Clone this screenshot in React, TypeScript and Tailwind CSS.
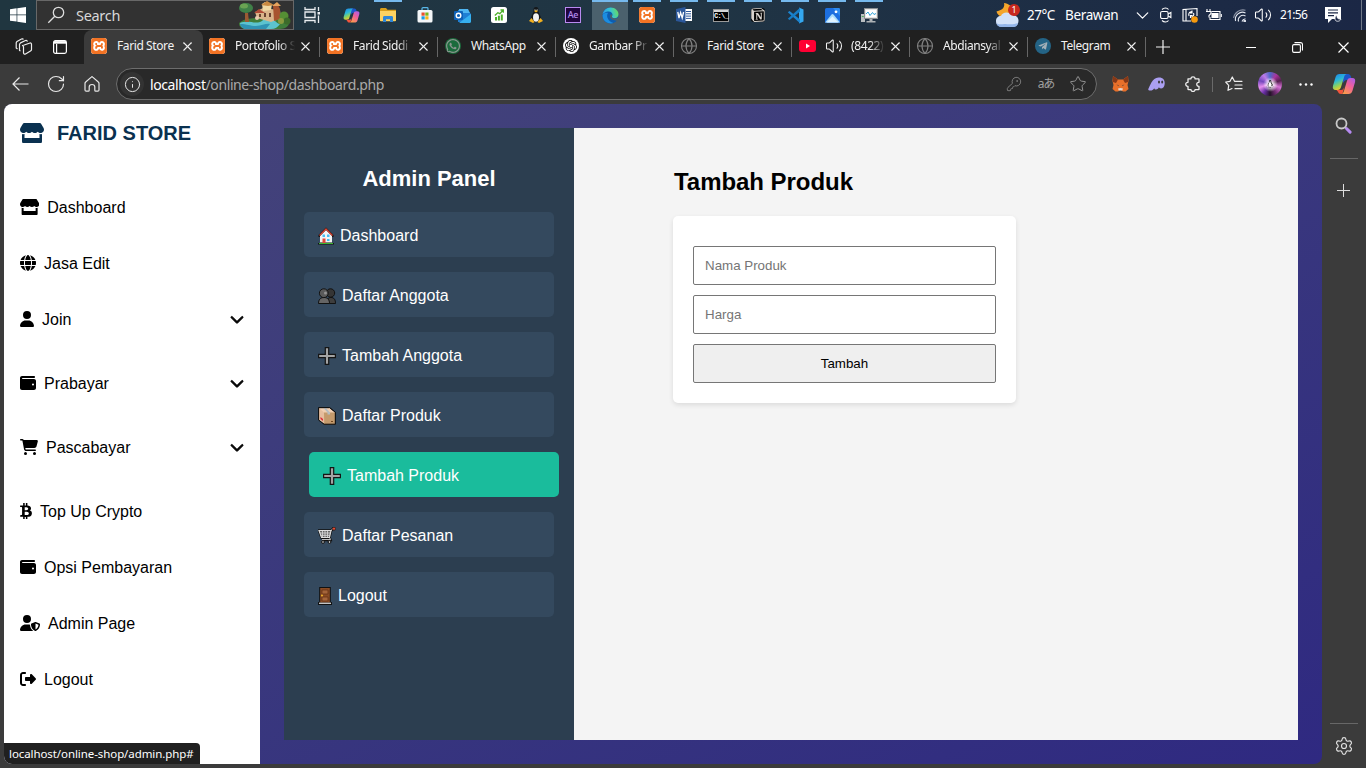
import React from "react";
import { FaStore, FaWhatsapp, FaTelegramPlane, FaLinux } from "react-icons/fa";
import { FaGlobe, FaUser, FaWallet, FaCartShopping, FaBtc, FaUserShield, FaRightFromBracket, FaChevronDown } from "react-icons/fa6";
import { SiXampp, SiOpenai, SiNotion } from "react-icons/si";
import { Search, Globe, X, Plus, RotateCw, Info, KeyRound, Star, Settings, Volume2, ChevronDown } from "lucide-react";

type Kids = { children?: React.ReactNode };

/* ---------- shared glyphs ---------- */

const Xampp = () => <SiXampp size={16} className="rounded-[3px] bg-white text-[#f27324]" />;

const Copilot = ({ size }: { size: number }) => (
  <svg width={size} height={size} viewBox="0 0 24 24">
    <defs>
      <linearGradient id="cpa" x1="0" y1="0" x2="0.4" y2="1">
        <stop offset="0" stopColor="#1c7fe8" />
        <stop offset="0.45" stopColor="#2bb8d8" />
        <stop offset="0.75" stopColor="#8fd25c" />
        <stop offset="1" stopColor="#f2c62f" />
      </linearGradient>
      <linearGradient id="cpb" x1="1" y1="0" x2="0.3" y2="1">
        <stop offset="0" stopColor="#a25bf0" />
        <stop offset="0.5" stopColor="#f0609a" />
        <stop offset="1" stopColor="#fb9a4b" />
      </linearGradient>
    </defs>
    <path fill="#1d55c9" d="M10 2h6c1.600 0 2.400 1 2.900 2.600L19.800 8H15c-2 0-3 1-3.600 3L10 6z" />
    <path fill="url(#cpa)" d="M7.500 2h7.200c-1.500.3-2.200 1.500-2.700 3.200l-2.800 9.300C8.500 17 7.500 18 5.500 18H3.700C1.300 18 .3 16.500 1 13.800L3.600 5C4.200 3 5.500 2 7.500 2z" />
    <path fill="url(#cpb)" d="M16.500 22H9.300c1.500-.3 2.200-1.500 2.700-3.200l2.800-9.300C15.500 7 16.500 6 18.500 6h1.800c2.400 0 3.400 1.500 2.700 4.200L20.400 19c-.6 2-1.900 3-3.900 3z" />
    <path fill="#f2553d" d="M4.500 18H9c1.500 0 2.400-.8 3-2.500l.6-1.800L11 20c-.4 1.400-1 2-2 2-1.600 0-2.500-.8-3-2.200z" />
  </svg>
);

/* ---------- taskbar ---------- */

const TaskIcon = ({ children, open, active }: Kids & { open?: boolean; active?: boolean }) => (
  <div className={`mr-px flex h-[30px] w-9 flex-col items-center ${active ? "bg-[#4b616d]" : ""}`}>
    <div className={`h-[2px] shrink-0 ${active ? "w-9" : "w-7"} ${open || active ? "bg-[#76b9ed]" : ""}`} />
    <div className="flex h-[26px] items-center justify-center">{children}</div>
  </div>
);

const SearchScene = () => (
  <svg width="54" height="28" viewBox="0 0 54 28" className="mr-[2px]">
    <path d="M2 22c6-5 10-4 16-5l16-5c8 0 17 4 18 10 0 3-4 6-9 6H10C5 28 2 26 2 22z" fill="#3f7d3a" />
    <path d="M3 22c8-3 14 1 20-1 5-2 3-5 8-5 4 0 9 7 12 7-2 3-5 5-9 5H10c-4 0-7-3-7-6z" fill="#5cc3cf" />
    <path d="M3 23c7 0 10 2 16 2s10-3 14-2l-4 5H10c-4 0-6-2-7-5z" fill="#2f93b4" />
    <path d="M8 12h3l1 9H8z" fill="#9b5a33" />
    <ellipse cx="9" cy="7" rx="7" ry="5" fill="#3f8048" />
    <ellipse cx="7" cy="5" rx="4" ry="2.500" fill="#6aa253" />
    <path d="M18 11l10-5 6 2 9 1 1 8-10 4-14-4z" fill="#d9b48a" />
    <path d="M17 12l5-4 6 4z" fill="#b04b37" />
    <path d="M25 3l3-2 7 2-1 6-8 1z" fill="#f0d9a4" />
    <path d="M24 4l6-4 7 4-6 1z" fill="#c98a42" />
    <path d="M36 4l4-2 3 6 0 10-6 2z" fill="#a8532f" />
    <path d="M35 5l5-4 4 4z" fill="#e4a35e" />
    <path d="M22 13h2v3h-2zM27 12h2v4h-2zM32 12h2v4h-2z" fill="#6a4130" />
    <circle cx="47" cy="15" r="4.500" fill="#558f34" />
    <circle cx="50" cy="20" r="3.500" fill="#3c6b2a" />
    <circle cx="44" cy="20" r="3" fill="#8a9a3f" />
    <circle cx="20" cy="17" r="2" fill="#e9cdb2" />
  </svg>
);

const Taskbar = () => (
  <div className="flex h-[30px] w-full shrink-0 bg-gradient-to-r from-[#203640] via-[#203544] to-[#1b2745]">
    <div className="flex w-9 items-center justify-center">
      <svg width="16" height="16" viewBox="0 0 16 16" fill="#fff">
        <path d="M0 2.200l6.600-.9v6.200H0zM7.300 1.200L16 0v7.500H7.300zM0 8.300h6.600v6.300L0 13.700zM7.300 8.300H16V16l-8.700-1.300z" />
      </svg>
    </div>
    <div className="flex h-[30px] w-[258px] items-center border border-[#686868] bg-[#323232] pl-[10px] text-[#d8d8d8]">
      <svg width="18" height="18" viewBox="0 0 18 18" fill="none" stroke="#ddd" strokeWidth="1.300">
        <circle cx="11.500" cy="6.500" r="5.200" /><path d="M7.800 10.200L1.300 16.700" />
      </svg>
      <span className="ml-[11px] flex-1 pt-px text-[14.5px] tracking-[-0.3px]">Search</span>
      <SearchScene />
    </div>
    <div className="flex pl-0">
      <TaskIcon>
        <svg width="17" height="16" viewBox="0 0 17 16" fill="none" stroke="#e9edf0" strokeWidth="1.300">
          <path d="M1 0v2.500h10V0M1 16v-2.500h10V16M1 5h10v5.500H1zM14.500 0v4M14.500 8.500V16" />
          <rect x="13.500" y="5" width="2.500" height="2.500" fill="#e9edf0" stroke="none" />
        </svg>
      </TaskIcon>
      <div className="w-[2px]" />
      <TaskIcon><Copilot size={17} /></TaskIcon>
      <TaskIcon open>
        <svg width="16" height="14" viewBox="0 0 16 14">
          <path d="M0 1.500C0 .7.600 0 1.500 0H6l1.500 1.800H16V13H0z" fill="#d99e1b" />
          <path d="M0 3h16v9c0 .8-.5 1.300-1.300 1.300H1.300C.5 13.300 0 12.800 0 12z" fill="#fdd261" />
          <path d="M3 14V9.500C3 8.700 3.500 8 4.500 8h7c1 0 1.500.7 1.500 1.500V14h-3v-2.800H6V14z" fill="#2f86d6" />
        </svg>
      </TaskIcon>
      <TaskIcon>
        <svg width="16" height="16" viewBox="0 0 16 16">
          <path d="M5 4V1.500C5 1 5.400.7 6 .7h4c.6 0 1 .3 1 .8V4" fill="none" stroke="#58b7e8" strokeWidth="1.200" />
          <rect x="0.500" y="3" width="15" height="12.500" rx="1.500" fill="#f3f6f8" />
          <path d="M4.500 5.500h3.200v3.200H4.500z" fill="#e8502f" /><path d="M8.300 5.500h3.200v3.200H8.300z" fill="#7bb51b" />
          <path d="M4.500 9.300h3.200v3.200H4.500z" fill="#1a9be6" /><path d="M8.300 9.300h3.200v3.200H8.300z" fill="#f7b61a" />
        </svg>
      </TaskIcon>
      <TaskIcon>
        <svg width="17" height="15" viewBox="0 0 17 15">
          <path d="M4 2l8-1 5 5v8H4z" fill="#1f7fd4" /><path d="M5 1h9l2 4H5z" fill="#4fb5f1" />
          <path d="M17 6v7.500c0 .8-.6 1.500-1.500 1.500H5z" fill="#36b0f0" />
          <rect x="0" y="3" width="9" height="9" rx="1" fill="#0f62b8" />
          <circle cx="4.500" cy="7.500" r="2.300" fill="none" stroke="#fff" strokeWidth="1.400" />
        </svg>
      </TaskIcon>
      <TaskIcon>
        <svg width="16" height="16" viewBox="0 0 16 16">
          <rect width="16" height="16" rx="2.500" fill="#fff" />
          <path d="M4 10h2v3.500H4zM6.900 8.700h2v4.800h-2zM9.800 7.500h2v6h-2z" fill="#4caf2a" />
          <path d="M3.800 8.500l3-2.800 2 1L12 3.300M9.500 3h2.800v2.800" fill="none" stroke="#4caf2a" strokeWidth="1.300" />
        </svg>
      </TaskIcon>
      <TaskIcon>
        <svg width="14" height="16" viewBox="0 0 14 16">
          <path d="M7 0C5 0 4.300 1.500 4.500 4 4.500 6 2.500 8 2 11c-.2 2 1 3.500 2 4h6c1-.5 2-2 2-4-.5-3-2.400-5-2.500-7C9.700 1.500 9 0 7 0z" fill="#15181a" />
          <ellipse cx="7" cy="10.500" rx="3" ry="4.200" fill="#f2f2f2" />
          <path d="M5 4l2-1 2 1-2 1.600z" fill="#f5b31b" /><path d="M5.500 2.500h.9v.9h-.9zM7.700 2.500h.9v.9h-.9z" fill="#fff" />
          <path d="M0 14l2.500-3 3 4-1.500 1zM14 14l-2.500-3-3 4 1.500 1z" fill="#f2b01e" />
        </svg>
      </TaskIcon>
      <TaskIcon>
        <span className="flex h-4 w-4 items-center justify-center border border-[#b98af0] bg-[#21053f] text-[9px] font-medium tracking-[-0.3px] text-[#b48cf0]">Ae</span>
      </TaskIcon>
      <TaskIcon active>
        <svg width="17" height="17" viewBox="0 0 17 17">
          <defs>
            <linearGradient id="eg" x1="0" y1="0.500" x2="1" y2="0.300"><stop offset="0" stopColor="#2b9be8" /><stop offset="0.500" stopColor="#35c3d4" /><stop offset="1" stopColor="#6bdc5a" /></linearGradient>
          </defs>
          <circle cx="8.500" cy="8.500" r="8" fill="#0d5db0" />
          <path d="M.5 8C1 3.500 4.500.5 8.700.5 13.500.5 16.500 4 16.500 7.200c0 2.500-1.800 4-4 4-1.700 0-2.700-.7-2.700-1.400 0-.5.7-.8.7-2C10.500 6 9 4.600 6.800 4.600 3.500 4.600.9 6.500.5 8z" fill="url(#eg)" />
          <path d="M.6 8C1.500 6 4 5.500 6.200 5.800 5 7 4.800 9 5.600 11c1 2.500 3.200 4.500 5.800 5C7 17.500.3 14.500.6 8z" fill="#1c8de0" />
          <path d="M10 9.800c0 1 1.300 1.700 3 1.700 1.200 0 2.300-.5 3.900-1l.1 2c-.5.600-1 1-1.400 1.300C11.500 13.500 8 12 8 9.500c0-1.500.8-2.200 2-2.300.4 1-.2 1.800 0 2.600z" fill="#4b616d" />
        </svg>
      </TaskIcon>
      <TaskIcon open><Xampp /></TaskIcon>
      <TaskIcon open>
        <svg width="16" height="16" viewBox="0 0 16 16">
          <rect x="8" y="2" width="8" height="12" fill="#fff" />
          <path d="M10 4.500h5M10 6.800h5M10 9.100h5M10 11.400h5" stroke="#2b579a" />
          <path d="M0 2l9.500-2v16L0 14z" fill="#2b579a" />
          <path d="M1.800 5l1.200 6 1.600-5.500L6.200 11l1.400-6" fill="none" stroke="#fff" strokeWidth="1.300" />
        </svg>
      </TaskIcon>
      <TaskIcon open>
        <div className="flex h-[13px] w-4 flex-col border border-[#9a9a9a] bg-black">
          <div className="h-[2px] bg-[#d6d6d6]" />
          <span className="font-['Liberation_Mono'] text-[7px] font-bold leading-[9px] tracking-[-0.7px] text-white">C:\_</span>
        </div>
      </TaskIcon>
      <TaskIcon open><SiNotion size={14} className="rounded-[3px] bg-black text-[#d8d4cf]" /></TaskIcon>
      <TaskIcon open>
        <svg width="17" height="17" viewBox="0 0 17 17">
          <path d="M12 .5l4.500 2v12l-4.500 2z" fill="#34a8f0" />
          <path d="M.8 5.300l1.800-1.200L13 12.500v3.800z" fill="#1b85d1" /><path d="M.8 11.700l1.800 1.200L13 4.500V.7z" fill="#167cc4" />
        </svg>
      </TaskIcon>
      <TaskIcon open>
        <svg width="15" height="15" viewBox="0 0 15 15">
          <rect width="15" height="15" rx="1.500" fill="#1c6fe0" /><path d="M8 0h5.500C14.300 0 15 .7 15 1.500V8z" fill="#2d8bf0" />
          <path d="M0 14.500L6.500 6.500c.6-.7 1.400-.7 2 0L15 14.500z" fill="#a9dcfb" /><path d="M1.500 14.500L7.500 8.500l6 6z" fill="#e0f3ff" />
          <circle cx="11" cy="3.800" r="1.400" fill="#fff" />
        </svg>
      </TaskIcon>
      <TaskIcon open>
        <svg width="17" height="15" viewBox="0 0 17 15">
          <path d="M0 6h4v8H0z" fill="#b9bdc0" /><path d="M.8 8h2v1h-2z" fill="#4fb35b" />
          <rect x="3.500" y=".5" width="13" height="10" fill="#e6e6e6" stroke="#8b8f92" />
          <path d="M5 2h10v7H5z" fill="#fff" /><path d="M5 6l2-2 2 3.500 2.500-3 1.500 2 2-1" fill="none" stroke="#2fa2d8" />
          <path d="M8.500 11h3v2h3v1.500h-9V13h3z" fill="#aeb2b5" />
        </svg>
      </TaskIcon>
    </div>
    <div className="ml-auto flex items-center text-white">
      <svg width="28" height="26" viewBox="0 0 28 26" className="mr-[5px]">
        <path d="M10 1c1 4-1 7-7.500 8.500C3 12 5 14 8 15l9-3V4C14 2 12 1 10 1z" fill="#f4a62c" />
        <path d="M7 14c1-4 8-5 10.500-1 4-.5 7 2 7 5.500 0 3.500-2 6-5 6H7c-3.500 0-5-2.500-5-5.500 0-3 2-5 5-5z" fill="#d3e2f9" />
        <path d="M2.500 21c2 2 5 1 8 1s9 1 13.500-1c-.5 2.500-2 4-4 4H7c-2 0-4-1.500-4.500-4z" fill="#94b6ea" />
        <circle cx="20" cy="8" r="6" fill="#c8281e" />
        <text x="20" y="11.300" fontSize="9" fill="#fff" textAnchor="middle">1</text>
      </svg>
      <span className="w-[38px] whitespace-nowrap text-[13.5px] tracking-[-0.5px]">27°C</span>
      <span className="w-[65px] text-[13.5px] tracking-[-0.35px]">Berawan</span>
      <span className="flex w-6 justify-center"><ChevronDown size={21} strokeWidth={1.400} /></span>
      <span className="flex w-6 justify-center">
        <svg width="12" height="16" viewBox="0 0 12 16" fill="none" stroke="#fff" strokeWidth="1.100">
          <path d="M2 2.500C4 .5 7 .5 8.500 2.500M2 13.500c2 2 5 2 6.500 0" /><rect x=".6" y="4.500" width="7.500" height="7" rx="1.500" /><path d="M8.100 7l2.800-1.500v5L8.100 9" />
        </svg>
      </span>
      <span className="flex w-6 justify-center">
        <svg width="16" height="16" viewBox="0 0 16 16" fill="none" stroke="#fff" strokeWidth="1.100">
          <path d="M9 14H1V2.500l14-1V9M4 2.500V14M7 9c-1-3 1-4.500 3-4M10 3.500V6H8M11.500 6c1 2-.5 4-2.500 4M8.500 11V8.500h2" /><circle cx="12.500" cy="12.500" r="3.300" fill="#f79a0c" stroke="none" />
        </svg>
      </span>
      <span className="flex w-6 justify-center">
        <svg width="16" height="12" viewBox="0 0 16 12" fill="none" stroke="#fff" strokeWidth="1.100">
          <path d="M5.500 2.500H14v8H4V8" /><path d="M6 4.500h6v4H6z" fill="#fff" /><path d="M15.300 5v3M1 0v2M4 0v2M0 2.500h5v2l-2 2v2" />
        </svg>
      </span>
      <span className="flex w-[26px] justify-center">
        <svg width="13" height="13" viewBox="0 0 13 13" fill="none" stroke="#e4e8f0" strokeWidth="1.100">
          <path d="M.6 9A9.500 9.500 0 0 1 12.500 1.200" opacity=".55" /><path d="M2.600 12A7 7 0 0 1 12.500 4M5.500 12.500A4.800 4.800 0 0 1 12.500 7M9 12.500c.5-1.500 1.500-2.500 3.500-2.800" /><circle cx="11.700" cy="12" r=".8" fill="#fff" />
        </svg>
      </span>
      <span className="flex w-[22px] justify-center"><Volume2 size={18} strokeWidth={1.400} /></span>
      <span className="ml-[6px] w-[43px] text-[12px] tracking-[-0.7px]">21:56</span>
      <svg width="17" height="17" viewBox="0 0 17 17" className="ml-[2px]">
        <path d="M0 0h16v12H7l-4 4v-4H0z" fill="#fff" /><path d="M3 3h10M3 5.800h10M3 8.600h6" stroke="#1b2745" strokeWidth="1.200" />
        <path d="M12 8c-.5 3 1 4.500 4 4-1 3-6 3-6 0 0-2 .7-3.400 2-4z" fill="#1b2745" stroke="#fff" strokeWidth=".8" />
      </svg>
      <span className="ml-[19px] mr-1 h-[30px] w-px bg-[#6f7887]" />
    </div>
  </div>
);

/* ---------- browser chrome ---------- */

const Tab = ({ icon, title, active, line, fade, pre }: { icon: React.ReactNode; title: string; active?: boolean; line?: boolean; fade?: boolean; pre?: React.ReactNode }) => (
  <div className={`flex h-[34px] items-center pb-[2px] pl-[7px] ${active ? "-mr-px w-[119px] rounded-t-lg bg-[#3b3b3b]" : "w-[118px]"}`}>
    <span className="flex w-4 shrink-0 justify-center">{icon}</span>
    <span className={`ml-[10px] flex w-[60px] shrink-0 items-center whitespace-nowrap text-[12px] tracking-[-0.4px] text-[#f2f2f2] ${fade ? "[mask-image:linear-gradient(to_right,black_74%,transparent_100%)]" : ""}`}>
      {pre}{title}
    </span>
    <span className="flex w-5 shrink-0 justify-center"><X size={15} strokeWidth={1.700} color="#f0f0f0" /></span>
    <span className={`ml-auto mt-[2px] h-5 w-px ${line ? "bg-[#666]" : ""}`} />
  </div>
);

const TabStrip = () => (
  <div className="flex h-[34px] shrink-0 items-center bg-[#202020] text-[#f0f0f0]">
    <div className="flex w-12 justify-center">
      <svg width="18" height="18" viewBox="0 0 18 18" fill="none" stroke="#eee" strokeWidth="1.200" strokeLinejoin="round">
        <path d="M8.500 7.300l6.500-2.300c.8-.2 1.500.3 1.500 1.200v5.300c0 .6-.4 1.200-1 1.500l-5 3c-1 .5-2 0-2-1.200V8.800c0-.7-.5-1.300-1.500-1.500M5.500 13l-1-.5V6.500c0-.7.400-1.200 1-1.600l5-2.400c.8-.3 1.700.2 2 1M2.500 11L1.200 10V5c0-.7.300-1.100.8-1.500L6.500 1c.7-.4 1.500-.2 1.900.5" />
      </svg>
    </div>
    <div className="flex w-9 justify-center pr-3">
      <svg width="14" height="14" viewBox="0 0 14 14" fill="none" stroke="#fff" strokeWidth="1.200">
        <rect x=".6" y=".6" width="12.800" height="12.800" rx="1.800" /><path d="M1 2.400h12" strokeWidth="2.600" /><path d="M3.600 4v9" />
      </svg>
    </div>
    <Tab icon={<Xampp />} title="Farid Store" active />
    <Tab icon={<Xampp />} title="Portofolio S" line fade />
    <Tab icon={<Xampp />} title="Farid Siddi" line fade />
    <Tab icon={<FaWhatsapp size={16} className="shrink-0 rounded-full bg-[#1b6b3c] text-[#8b958f]" />} title="WhatsApp" line />
    <Tab icon={<span className="flex h-4 w-4 items-center justify-center rounded-full bg-white text-black"><SiOpenai size={12} /></span>} title="Gambar Pr" line fade />
    <Tab icon={<Globe size={18} strokeWidth={1.500} color="#808080" className="shrink-0" />} title="Farid Store" line />
    <Tab
      icon={<svg width="17" height="12" viewBox="0 0 17 12" className="shrink-0"><rect width="17" height="12" rx="3" fill="#ff0033" /><path d="M7 3.500v5L11 6z" fill="#fff" /></svg>}
      pre={<Volume2 size={18} strokeWidth={1.400} className="mr-[8px] shrink-0" />}
      title="(8422)" line fade
    />
    <Tab icon={<Globe size={18} strokeWidth={1.500} color="#808080" className="shrink-0" />} title="Abdiansyal" line fade />
    <Tab icon={<span className="flex h-4 w-4 items-center justify-center rounded-full bg-[#246486] text-[#a3b0b8]"><FaTelegramPlane size={10} className="mr-px" /></span>} title="Telegram" line />
    <div className="flex w-[34px] justify-center">
      <svg width="14" height="14" viewBox="0 0 14 14" stroke="#f0f0f0"><path d="M7 0v14M0 7h14" strokeWidth="1.200" /></svg>
    </div>
    <div className="ml-auto flex">
      <div className="flex w-[46px] items-center justify-center"><span className="h-px w-[10px] bg-white" /></div>
      <div className="flex w-[46px] items-center justify-center">
        <svg width="11" height="11" viewBox="0 0 11 11" fill="none" stroke="#fff" strokeWidth="1.100"><rect x=".6" y="2.600" width="7.800" height="7.800" rx="1.300" /><path d="M2.500.6h6c1.200 0 2 .8 2 2v6" /></svg>
      </div>
      <div className="flex w-[46px] items-center justify-center">
        <svg width="11" height="11" viewBox="0 0 11 11" stroke="#fff" strokeWidth="1.200"><path d="M.5.5l10 10M10.500.5l-10 10" /></svg>
      </div>
    </div>
  </div>
);

const Tool = ({ children }: Kids) => <span className="flex h-9 w-9 shrink-0 items-center justify-center">{children}</span>;

const AddressRow = () => (
  <div className="flex h-10 shrink-0 items-center bg-[#3b3b3b] pl-[2px] text-[#e8e8e8]">
    <Tool>
      <svg width="17" height="14" viewBox="0 0 17 14" fill="none" stroke="#e8e8e8" strokeWidth="1.200"><path d="M7.500.5L1 7l6.500 6.500M1 7h15.500" /></svg>
    </Tool>
    <Tool><RotateCw size={20} strokeWidth={1.400} /></Tool>
    <Tool>
      <svg width="16" height="16" viewBox="0 0 16 16" fill="none" stroke="#e8e8e8" strokeWidth="1.200" strokeLinejoin="round">
        <path d="M7.300 1.100L1.700 6c-.5.4-.7.800-.7 1.400V14c0 .8.400 1.200 1.200 1.200h2.100c.5 0 .9-.4.900-.9v-3.500c0-1.300.9-2.300 2.800-2.300s2.800 1 2.800 2.300v3.500c0 .5.400.9.900.9h2.100c.8 0 1.200-.4 1.200-1.200V7.400c0-.6-.2-1-.7-1.400L8.700 1.100c-.4-.4-1-.4-1.400 0z" />
      </svg>
    </Tool>
    <div className="ml-[6px] flex h-8 w-[981px] items-center rounded-full border border-[#6d6d6d] bg-[#292929] pl-[3px]">
      <span className="flex h-6 w-6 items-center justify-center rounded-full bg-[#333]"><Info size={17} strokeWidth={1.400} /></span>
      <span className="ml-[6px] flex-1 text-[14px] tracking-[-0.4px] text-[#a9a9a9]"><span className="text-white">localhost</span>/online-shop/dashboard.php</span>
      <span className="flex w-8 justify-center text-[#868686]"><KeyRound size={16} strokeWidth={1.300} /></span>
      <span className="flex w-8 justify-center whitespace-nowrap text-[12px] tracking-[-1px] text-[#a0a0a0]">aあ</span>
      <span className="mr-[2px] flex w-8 justify-center text-[#969696]"><Star size={18} strokeWidth={1.300} /></span>
    </div>
    <div className="ml-[5px] flex items-center">
      <Tool>
        <svg width="17" height="16" viewBox="0 0 17 16">
          <path d="M1 0l5 3.500h5L16 0l.5 5-1 4 1 4-3 2.500H11L8.500 14 6 15.500H3.500L.5 13l1-4-1-4z" fill="#e8702a" />
          <path d="M1 0l5 3.500L4 7 .8 6zM16 0l-5 3.500L13 7l3.200-1z" fill="#863818" />
          <path d="M6 12.500L8.500 12l2.500.500-.7 2H6.700z" fill="#e6d5cc" /><path d="M4.500 8.500l2 .8.300 1zM12.500 8.500l-2 .8-.3 1z" fill="#26303a" />
        </svg>
      </Tool>
      <Tool>
        <svg width="17" height="14" viewBox="0 0 17 14">
          <path d="M.3 12C2 9 4 1 10.500.5 15 .3 17 3 16.700 7c-.3 3-2 4.500-3.700 4.500-1.300 0-2-1-2-1.500-.5 1.500-1.600 2.500-3 2.500-1 0-1.600-.5-1.700-1.300C5.300 12.700 4 13.500 2.500 13.500 1 13.500 0 13 .3 12z" fill="#ab9ff2" />
          <ellipse cx="11" cy="5" rx="1" ry="1.600" fill="#3b3b3b" /><ellipse cx="14.200" cy="5" rx="1" ry="1.600" fill="#3b3b3b" />
        </svg>
      </Tool>
      <Tool>
        <svg width="16" height="16" viewBox="0 0 16 16" fill="none" stroke="#eee" strokeWidth="1.300" strokeLinejoin="round" className="ml-[2px]">
          <path d="M3 2.800h3C5.700.2 10.300.2 10 2.800h3.500c.3 0 .5.200.5.500v3c-3-.3-3 4.300 0 4v2.900c0 .3-.2.500-.5.500H10c.3 2.200-4.300 2.200-4 0H3.500c-.3 0-.5-.2-.5-.5v-2.900c-3 .3-3-4.300 0-4z" />
        </svg>
      </Tool>
      <span className="ml-[2px] mr-[3px] h-[15px] w-px bg-[#6a6a6a]" />
      <Tool>
        <svg width="18" height="16" viewBox="0 0 18 16" fill="none" stroke="#eee" strokeWidth="1.200" strokeLinejoin="round" strokeLinecap="round">
          <path d="M9.500 5.300L7.300 1 5 5.300l-4.300.7 3 3.300-.7 5 4-1.800M9.500 5.300H17M10 9h7M10 12.700h7" />
        </svg>
      </Tool>
      <Tool>
        <span className="flex h-6 w-6 items-center justify-center rounded-full bg-[conic-gradient(#4e68c9,#a8349b,#55204f,#d873d7,#752f77,#221126,#6a30a6,#e58fee,#7447bd,#bd7be8,#4e68c9)]">
          <span className="flex h-[15px] w-[15px] items-center justify-center rounded-full bg-[radial-gradient(#fff_15%,#f0c9f700_70%)] text-[#222]"><FaLinux size={8} /></span>
        </span>
      </Tool>
      <Tool>
        <svg width="14" height="3" viewBox="0 0 14 3" fill="#fff"><circle cx="1.500" cy="1.500" r="1.200" /><circle cx="7" cy="1.500" r="1.200" /><circle cx="12.500" cy="1.500" r="1.200" /></svg>
      </Tool>
      <Tool><span className="ml-[4px]"><Copilot size={24} /></span></Tool>
    </div>
  </div>
);

const SideRail = () => (
  <div className="flex w-11 shrink-0 flex-col items-center text-[#e0e0e0]">
    <svg width="17" height="17" viewBox="0 0 17 17" fill="none" className="mr-[2px] mt-[13px]">
      <path d="M10 10l2 2" stroke="#888" strokeWidth="1.500" /><path d="M11.500 11.500l3.600 3.600" stroke="#b58af0" strokeWidth="3" strokeLinecap="round" />
      <circle cx="6.500" cy="6.500" r="5" stroke="#c9c9c9" strokeWidth="1.800" />
    </svg>
    <span className="mt-6 h-px w-7 bg-[#676767]" />
    <svg width="13" height="13" viewBox="0 0 13 13" stroke="#ddd" className="mr-px mt-[25px]"><path d="M6.500 0v13M0 6.500h13" /></svg>
    <span className="mt-auto h-px w-7 bg-[#676767]" />
    <Settings size={20} strokeWidth={1.400} className="mb-3 mt-3" />
  </div>
);

/* ---------- store navigation ---------- */

const NavItem = ({ icon, label, sub }: { icon: React.ReactNode; label: string; sub?: boolean }) => (
  <div className={`flex h-10 items-center text-[16px] text-black ${sub ? "mb-6" : "mb-4"}`}>
    {icon}
    <span className="ml-2 whitespace-nowrap pt-[2px]">{label}</span>
    {sub && <FaChevronDown className="ml-auto h-4 w-[14px] overflow-visible stroke-current stroke-[28px]" />}
  </div>
);

const StoreNav = () => (
  <nav className="flex w-64 shrink-0 flex-col bg-white px-4 font-['Liberation_Sans',Arial,sans-serif]">
    <div className="mb-[54px] mt-[14px] flex h-[30px] items-center text-[#0a3150]">
      <FaStore className="h-5 w-6" />
      <span className="ml-[13px] text-[20px] font-bold">FARID STORE</span>
    </div>
    <div className="-mt-[15px] flex flex-col">
      <NavItem icon={<FaStore className="h-4 w-[19.25px]" />} label="Dashboard" />
      <NavItem icon={<FaGlobe className="h-4 w-4" />} label="Jasa Edit" />
      <NavItem icon={<FaUser className="h-4 w-[14px]" />} label="Join" sub />
      <NavItem icon={<FaWallet className="h-4 w-4" />} label="Prabayar" sub />
      <NavItem icon={<FaCartShopping className="h-4 w-[18px]" />} label="Pascabayar" sub />
      <NavItem icon={<FaBtc className="h-4 w-3" />} label="Top Up Crypto" />
      <NavItem icon={<FaWallet className="h-4 w-4" />} label="Opsi Pembayaran" />
      <NavItem icon={<FaUserShield className="h-4 w-5" />} label="Admin Page" />
      <NavItem icon={<FaRightFromBracket className="h-4 w-4" />} label="Logout" />
    </div>
  </nav>
);

/* ---------- admin panel ---------- */

const HomeIcon = () => (
  <svg width="16" height="18" viewBox="0 0 16 18">
    <path d="M8 .5L15.500 8v2H14v6h2v1.500H0V16h2v-6H.5V8z" fill="#111" />
    <path d="M8 3l6 6v6.500H2V9z" fill="#f4f4f4" /><path d="M1.500 8.500L8 2l6.500 6.500" fill="none" stroke="#d9412f" strokeWidth="1.300" />
    <path d="M4.500 7.500h2.500v2.500H4.500zM9 7.500h2.500v2.500H9zM9 12h2.500v2H9z" fill="#45bdf2" /><path d="M4.500 11.500h3V16h-3z" fill="#e0483a" /><path d="M1 16h14v1H1z" fill="#3fb52f" />
  </svg>
);
const PeopleIcon = () => (
  <svg width="18" height="16" viewBox="0 0 18 16" stroke="#111">
    <path d="M9 15.500c0-4 1-6 4-6s4.500 2 4.500 6z" fill="#3e3e3e" /><circle cx="12.500" cy="5" r="4.200" fill="#353535" />
    <path d="M.5 15.500c0-4 2-6 5.500-6s5.500 2 5.500 6z" fill="#656565" /><circle cx="5.800" cy="5.200" r="4.400" fill="#5a5a5a" />
    <circle cx="7.500" cy="5" r="1.500" fill="#929292" stroke="none" />
  </svg>
);
const PlusIcon = () => (
  <svg width="18" height="18" viewBox="0 0 18 18"><path d="M7.300.6h3.400v6.700h6.700v3.400h-6.700v6.700H7.300v-6.700H.6V7.300h6.700z" fill="#a3a3a3" stroke="#151515" strokeWidth="1.200" /></svg>
);
const BoxIcon = () => (
  <svg width="18" height="18" viewBox="0 0 18 18" stroke="#111">
    <path d="M.6.6h11l5.700 4.600v12H6.200L.6 13z" fill="#f1cfb2" /><path d="M6 5.500h11v11.700H6.200z" fill="#c49a6c" stroke="none" /><path d="M1 1l5 4.500V17l-5-4z" fill="#e6bd9e" stroke="none" />
    <path d="M5.500 1h2.500l4 4.500v2H9.500v-2z" fill="#b6bcc0" stroke="none" /><path d="M2.500 10l2.500 2v2l-2.500-2z" fill="#df2c37" stroke="none" /><path d="M13 15l1-1 1 1" stroke="#70461f" fill="none" />
    <path d="M.6.6h11l5.700 4.600v12H6.200L.6 13z" fill="none" />
  </svg>
);
const TrolleyIcon = () => (
  <svg width="18" height="17" viewBox="0 0 18 17" fill="none">
    <path d="M1 3.500h12l-1.500 7H3.500zM13 4l2.500-3H17M11.500 10.500l1 2.500H4" stroke="#111" strokeWidth="2.600" />
    <path d="M1 3.500h12l-1.500 7H3.500z" fill="#666" stroke="#ddd" strokeWidth="1.200" />
    <path d="M2 6h10.500M2.700 8.300H12M4.500 4v6M7 4v6M9.500 4v6M13 4l2-3M11.500 10.500l1 2H4" stroke="#d4d4d4" strokeWidth=".9" />
    <circle cx="16" cy="1.700" r="1.600" fill="#e54b35" stroke="#111" strokeWidth=".6" /><circle cx="5" cy="15" r="1.400" fill="#ccc" stroke="#111" /><circle cx="11.500" cy="15" r="1.400" fill="#ccc" stroke="#111" />
  </svg>
);
const DoorIcon = () => (
  <svg width="14" height="18" viewBox="0 0 14 18">
    <path d="M1.200 0h11.600v15H14v3H0v-3h1.200z" fill="#111" /><path d="M2.200 1h9.600v14.500H2.200z" fill="#8a4b24" />
    <path d="M4 3h6v4H4zM4 10h6v4H4z" fill="#a5653a" stroke="#5e2f12" strokeWidth=".7" /><circle cx="4" cy="8.500" r="1" fill="#f0b429" /><path d="M1 15.600h12V17H1z" fill="#c4c4c4" />
  </svg>
);

const PanelLink = ({ icon, label, active }: { icon: React.ReactNode; label: string; active?: boolean }) => (
  <a className={`flex h-[45px] items-center rounded-[5px] pl-[14px] pt-[2px] text-[16px] text-white ${active ? "translate-x-[5px] bg-[#1abc9c]" : "bg-[#34495e]"}`}>
    {icon}
    <span className="ml-[6px]">{label}</span>
  </a>
);

const AdminPanel = () => (
  <div className="flex flex-1 font-['Liberation_Sans',Arial,sans-serif]">
    <aside className="flex w-[290px] shrink-0 flex-col gap-[15px] bg-[#2c3e50] px-5">
      <h2 className="mb-1 mt-[37px] text-center text-[22px] font-bold leading-7 text-white">Admin Panel</h2>
      <PanelLink icon={<HomeIcon />} label="Dashboard" />
      <PanelLink icon={<PeopleIcon />} label="Daftar Anggota" />
      <PanelLink icon={<PlusIcon />} label="Tambah Anggota" />
      <PanelLink icon={<BoxIcon />} label="Daftar Produk" />
      <PanelLink icon={<PlusIcon />} label="Tambah Produk" active />
      <PanelLink icon={<TrolleyIcon />} label="Daftar Pesanan" />
      <PanelLink icon={<DoorIcon />} label="Logout" />
    </aside>
    <section className="flex-1 bg-[#f4f4f4] pl-[99px] pt-10">
      <h2 className="mb-5 pl-px text-[24px] font-bold leading-7 tracking-[-0.05px] text-black">Tambah Produk</h2>
      <form className="flex w-[343px] flex-col gap-[10px] rounded-[5px] bg-white px-5 pb-5 pt-[30px] text-[13.333px] shadow-[0_2px_5px_rgba(0,0,0,0.1)]">
        <input className="h-[39px] rounded-[2px] border border-[#767676] px-[11px] placeholder:text-[#757575]" placeholder="Nama Produk" />
        <input className="h-[39px] rounded-[2px] border border-[#767676] px-[11px] placeholder:text-[#757575]" placeholder="Harga" />
        <button type="button" className="h-[39px] rounded-[2px] border border-[#767676] bg-[#efefef] text-black">Tambah</button>
      </form>
    </section>
  </div>
);

export default function App() {
  return (
    <div className="flex h-[768px] w-[1366px] flex-col overflow-hidden bg-[#3b3b3b] font-['Noto_Sans','Noto_Sans_CJK_JP',sans-serif]">
      <Taskbar />
      <TabStrip />
      <AddressRow />
      <div className="flex flex-1 pl-1">
        <main className="relative mb-1 flex flex-1 overflow-hidden rounded-lg bg-gradient-to-br from-[#464579] to-[#2f2981]">
          <StoreNav />
          <div className="flex flex-1 p-6">
            <AdminPanel />
          </div>
          <div className="absolute bottom-0 left-0 flex h-[21px] w-[196px] items-center rounded-tr-[4px] bg-[#202020] pl-[5px] text-[11.5px] tracking-[-0.08px] text-white">
            localhost/online-shop/admin.php#
          </div>
        </main>
        <SideRail />
      </div>
    </div>
  );
}
